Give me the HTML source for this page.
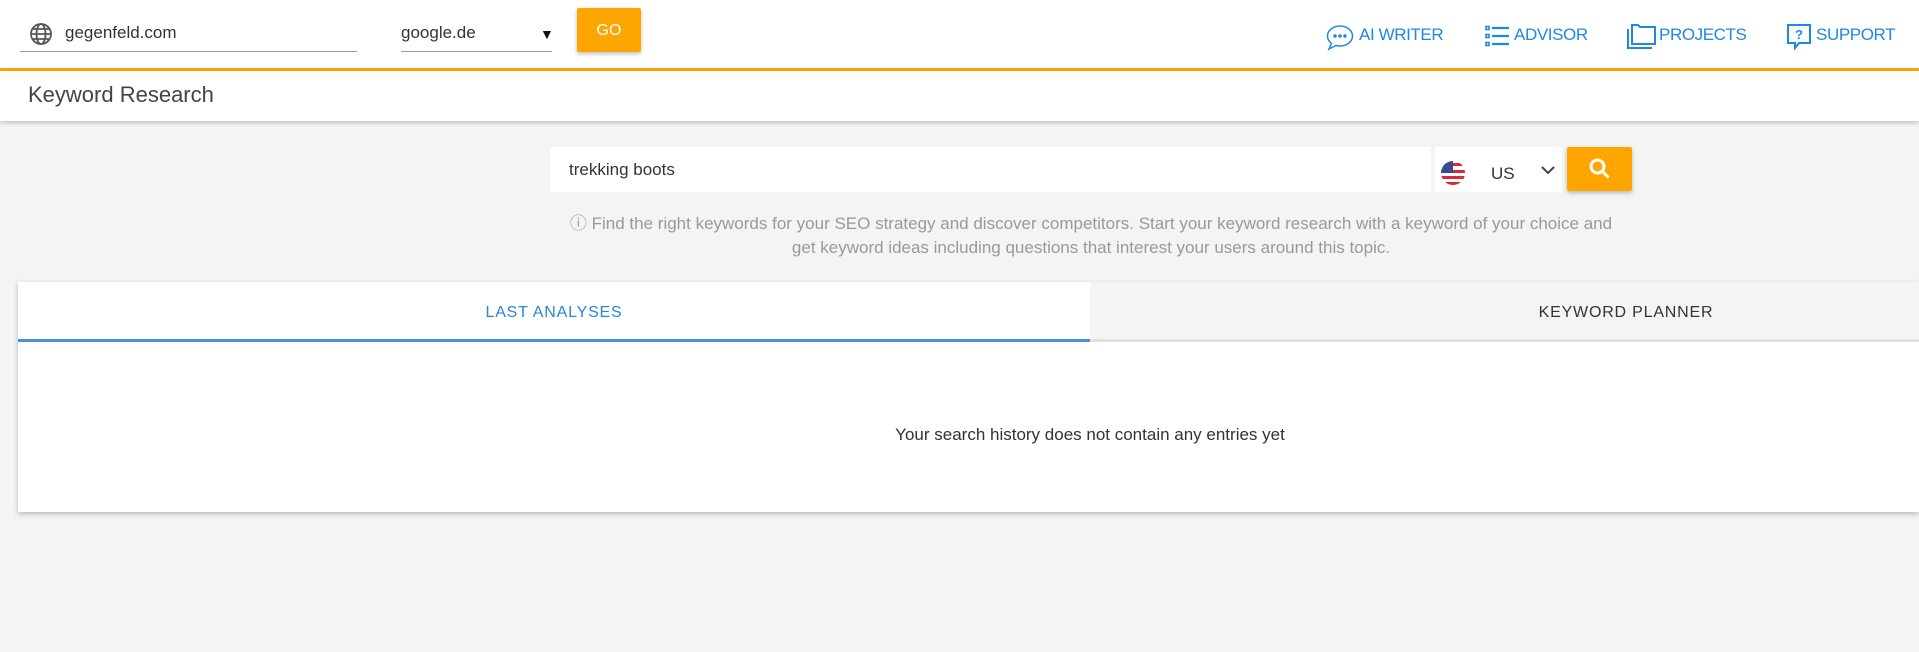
<!DOCTYPE html>
<html><head><meta charset="utf-8"><style>
*{box-sizing:border-box;margin:0;padding:0}
body{width:1919px;height:652px;overflow:hidden;background:#f4f4f4;font-family:"Liberation Sans",sans-serif;position:relative}
.abs{position:absolute}
.hdr{left:0;top:0;width:1919px;height:68px;background:#fff}
.orange{left:0;top:68px;width:1919px;height:3px;background:#ffa500}
.sub{left:0;top:71px;width:1919px;height:50px;background:#fff;box-shadow:0 2px 4px rgba(0,0,0,.2)}
.nav{color:#1e88e5;font-size:17px;top:25px;letter-spacing:-.4px}
.tab{font-size:16px;letter-spacing:.8px}
</style></head><body>
<div class="abs hdr"></div>
<svg class="abs" style="left:29px;top:22px" width="24" height="24" viewBox="0 0 24 24" fill="none" stroke="#555" stroke-width="1.8"><circle cx="12" cy="12" r="10"/><ellipse cx="12" cy="12" rx="4.5" ry="10"/><line x1="2" y1="12" x2="22" y2="12"/><path d="M4 7h16M4 17h16"/></svg>
<div class="abs" style="left:65px;top:23px;font-size:17px;color:#333">gegenfeld.com</div>
<div class="abs" style="left:20px;top:51px;width:337px;height:1px;background:#999"></div>
<div class="abs" style="left:401px;top:23px;font-size:17px;color:#333">google.de</div>
<div class="abs" style="left:540px;top:26px;font-size:14px;color:#111">▼</div>
<div class="abs" style="left:401px;top:51px;width:151px;height:1px;background:#999"></div>
<div class="abs" style="left:577px;top:8px;width:64px;height:44px;background:#ffa500;border-radius:2px;box-shadow:0 2px 4px rgba(0,0,0,.25);color:#fff;font-size:16px;text-align:center;line-height:46px">GO</div>

<svg class="abs" style="left:1325px;top:24px" width="30" height="27" viewBox="0 0 30 27" fill="none" stroke="#1e88e5" stroke-width="1.5"><path d="M15 2C8 2 2.5 6.5 2.5 12c0 3 1.5 5.5 4 7.3L4 25l7-3.5c1.3.3 2.6.5 4 .5 7 0 12.5-4.5 12.5-10S22 2 15 2z"/><circle cx="10" cy="12" r="1" fill="#1e88e5"/><circle cx="15" cy="12" r="1" fill="#1e88e5"/><circle cx="20" cy="12" r="1" fill="#1e88e5"/></svg>
<div class="abs nav" style="left:1359px">AI WRITER</div>
<svg class="abs" style="left:1485px;top:25px" width="25" height="22" viewBox="0 0 25 22" fill="none" stroke="#1e88e5" stroke-width="1.6"><rect x="1" y="1.5" width="3" height="3"/><rect x="1" y="9.5" width="3" height="3"/><rect x="1" y="17.5" width="3" height="3"/><path d="M7 3h17M7 11h17M7 19h17" stroke-width="2.2"/></svg>
<div class="abs nav" style="left:1514px">ADVISOR</div>
<svg class="abs" style="left:1626px;top:23px" width="32" height="26" viewBox="0 0 32 26" fill="none" stroke="#1e88e5" stroke-width="2"><path d="M2 6v19h24"/><path d="M6 2h6l2 2h15v17H6z"/></svg>
<div class="abs nav" style="left:1659px">PROJECTS</div>
<svg class="abs" style="left:1786px;top:23px" width="26" height="27" viewBox="0 0 26 27" fill="none" stroke="#1e88e5" stroke-width="2"><path d="M2 2h22v18H13l-4 5v-5H2z"/><text x="13" y="16" font-size="13" font-family="Liberation Sans" fill="#1e88e5" stroke="none" text-anchor="middle" font-weight="bold">?</text></svg>
<div class="abs nav" style="left:1816px">SUPPORT</div>

<div class="abs orange"></div>
<div class="abs sub"></div>
<div class="abs" style="left:28px;top:82px;font-size:22px;color:#444">Keyword Research</div>

<div class="abs" style="left:550px;top:147px;width:881px;height:45px;background:#fff"></div>
<div class="abs" style="left:569px;top:160px;font-size:17px;color:#333">trekking boots</div>
<div class="abs" style="left:1435px;top:147px;width:127px;height:45px;background:#fff"></div>
<svg class="abs" style="left:1440px;top:160px" width="26" height="26" viewBox="0 0 26 26"><defs><clipPath id="c"><circle cx="13" cy="13" r="12"/></clipPath></defs><g clip-path="url(#c)"><rect width="26" height="26" fill="#fff"/><rect y="3" width="26" height="3" fill="#d8283a"/><rect y="10" width="26" height="3" fill="#d8283a"/><rect y="16" width="26" height="3" fill="#d8283a"/><rect y="22" width="26" height="3" fill="#d8283a"/><rect width="13" height="13" fill="#3c4a8c"/></g></svg>
<div class="abs" style="left:1491px;top:164px;font-size:17px;color:#333">US</div>
<svg class="abs" style="left:1541px;top:166px" width="14" height="9" viewBox="0 0 14 9" fill="none" stroke="#444" stroke-width="2"><path d="M1 1l6 6 6-6"/></svg>
<div class="abs" style="left:1567px;top:147px;width:65px;height:44px;background:#ffa500;border-radius:2px;box-shadow:0 2px 4px rgba(0,0,0,.25)"></div>
<svg class="abs" style="left:1588px;top:157px" width="24" height="24" viewBox="0 0 24 24" fill="none" stroke="#fff" stroke-width="3"><circle cx="9.5" cy="9.5" r="6.5"/><path d="M14.5 14.5l6 6"/></svg>

<div class="abs" style="left:500px;top:212px;width:1182px;text-align:center;font-size:17px;line-height:24px;color:#999">ⓘ Find the right keywords for your SEO strategy and discover competitors. Start your keyword research with a keyword of your choice and<br>get keyword ideas including questions that interest your users around this topic.</div>

<div class="abs" style="left:18px;top:282px;width:1901px;height:230px;background:#fff;box-shadow:0 2px 5px rgba(0,0,0,.25)"></div>
<div class="abs" style="left:1090px;top:282px;width:829px;height:57px;background:#f4f4f4"></div>
<div class="abs" style="left:18px;top:339px;width:1901px;height:3px;background:#e0e0e0"></div>
<div class="abs" style="left:18px;top:339px;width:1072px;height:3px;background:#4a90d9"></div>
<div class="abs tab" style="left:354px;top:304px;width:400px;text-align:center;color:#2a86d6">LAST ANALYSES</div>
<div class="abs tab" style="left:1426px;top:304px;width:400px;text-align:center;color:#333">KEYWORD PLANNER</div>
<div class="abs" style="left:790px;top:425px;width:600px;text-align:center;font-size:17px;color:#333">Your search history does not contain any entries yet</div>
</body></html>
